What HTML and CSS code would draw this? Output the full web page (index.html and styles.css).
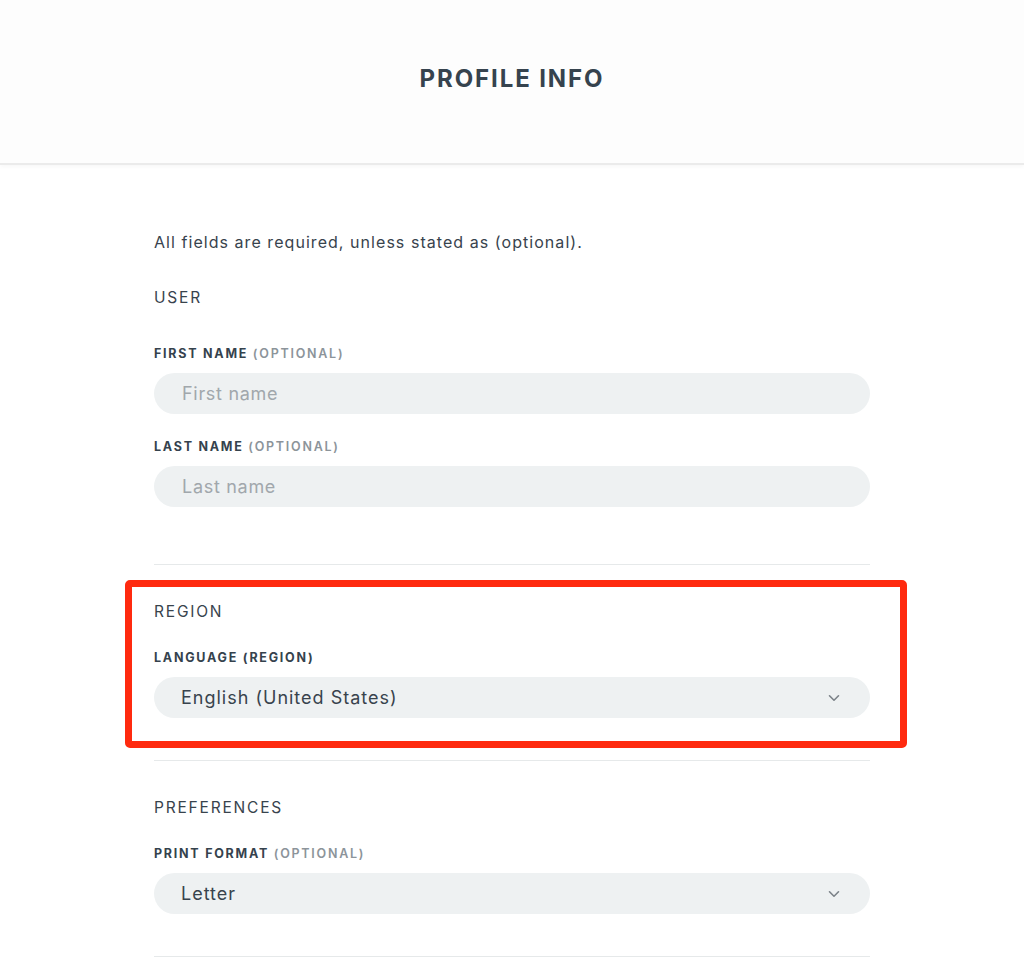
FILE: index.html
```html
<!DOCTYPE html>
<html lang="en">

<head>
    <meta charset="UTF-8">
    <meta name="viewport" content="width=device-width, initial-scale=1.0">
    <title>Profile info</title>
    <link rel="stylesheet" href="styles.css">
</head>

<body>
    <header class="top-bar">
        <h1>PROFILE INFO</h1>
    </header>

    <main class="profile">
        <p class="intro">All fields are required, unless stated as (optional).</p>

        <section class="section section-user">
            <h2>USER</h2>
            <div class="field">
                <label for="first-name">FIRST NAME <span class="opt">(OPTIONAL)</span></label>
                <input type="text" id="first-name" placeholder="First name">
            </div>
            <div class="field">
                <label for="last-name">LAST NAME <span class="opt">(OPTIONAL)</span></label>
                <input type="text" id="last-name" placeholder="Last name">
            </div>
        </section>

        <section class="section section-marked">
            <span class="marker"></span>
            <h2>REGION</h2>
            <div class="field">
                <label>LANGUAGE (REGION)</label>
                <div class="select">
                    <span>English (United States)</span>
                    <svg width="12" height="8" viewBox="0 0 12 8"><path d="M1.5 1.8 6 6.2 10.5 1.8" fill="none" stroke="#7b8288" stroke-width="1.6" stroke-linecap="round" stroke-linejoin="round"/></svg>
                </div>
            </div>
        </section>

        <section class="section">
            <h2>PREFERENCES</h2>
            <div class="field">
                <label>PRINT FORMAT <span class="opt">(OPTIONAL)</span></label>
                <div class="select">
                    <span>Letter</span>
                    <svg width="12" height="8" viewBox="0 0 12 8"><path d="M1.5 1.8 6 6.2 10.5 1.8" fill="none" stroke="#7b8288" stroke-width="1.6" stroke-linecap="round" stroke-linejoin="round"/></svg>
                </div>
            </div>
        </section>
    </main>
</body>

</html>
```

FILE: styles.css
```css
:root {
    --tekst: #38434d;
    --szary: #8c949a;
    --pole: #eef1f2;
    --linia: #e6e9ea;
}

html,
body {
    margin: 0;
    background-color: #ffffff;
    color: var(--tekst);
    font-family: Inter, 'Noto Sans', sans-serif;
}

.top-bar {
    height: 163px;
    display: flex;
    align-items: center;
    justify-content: center;
    background-color: #fdfdfd;
    border-bottom: 2px solid #ebebeb;
    box-shadow: 0 2px 4px rgba(0, 0, 0, 0.03);
}

.top-bar h1 {
    margin: 0 0 6px 0;
    font-size: 24px;
    font-weight: 700;
    letter-spacing: 1.9px;
    color: #36434e;
}

.profile {
    width: 716px;
    margin: 0 auto;
    padding-top: 67px;
}

.intro {
    margin: 0 0 36px 0;
    font-size: 16px;
    line-height: 20px;
    letter-spacing: 1.05px;
}

.section {
    position: relative;
    padding-top: 37px;
    padding-bottom: 42px;
    border-bottom: 1px solid var(--linia);
}

.section h2 {
    margin: 0 0 28px 0;
    font-size: 15.5px;
    line-height: 20px;
    font-weight: 400;
    letter-spacing: 1.8px;
}

.section-user {
    padding-top: 0;
    padding-bottom: 57px;
}

.section-user h2 {
    margin-bottom: 38px;
}

.field + .field {
    margin-top: 25px;
}

.field label {
    display: block;
    margin-bottom: 11px;
    font-size: 12.5px;
    line-height: 16px;
    font-weight: 700;
    letter-spacing: 1.75px;
    color: #35424d;
}

.field .opt {
    color: var(--szary);
    font-weight: 600;
}

.field input,
.select {
    box-sizing: border-box;
    width: 100%;
    height: 41px;
    border: none;
    border-radius: 21px;
    background-color: var(--pole);
    font-family: inherit;
    font-size: 18px;
    color: var(--tekst);
}

.field input {
    padding: 0 28px;
    outline: none;
    letter-spacing: 0.7px;
}

.field input::placeholder {
    color: #a1a7ac;
}

.select {
    display: flex;
    align-items: center;
    justify-content: space-between;
    padding: 0 30px 0 27px;
    letter-spacing: 1px;
}

/* czerwona ramka z adnotacji */
.marker {
    position: absolute;
    top: 15px;
    left: -29px;
    right: -37px;
    bottom: 12px;
    border: 7px solid #ff2a0f;
    border-radius: 5px;
    pointer-events: none;
}
```
